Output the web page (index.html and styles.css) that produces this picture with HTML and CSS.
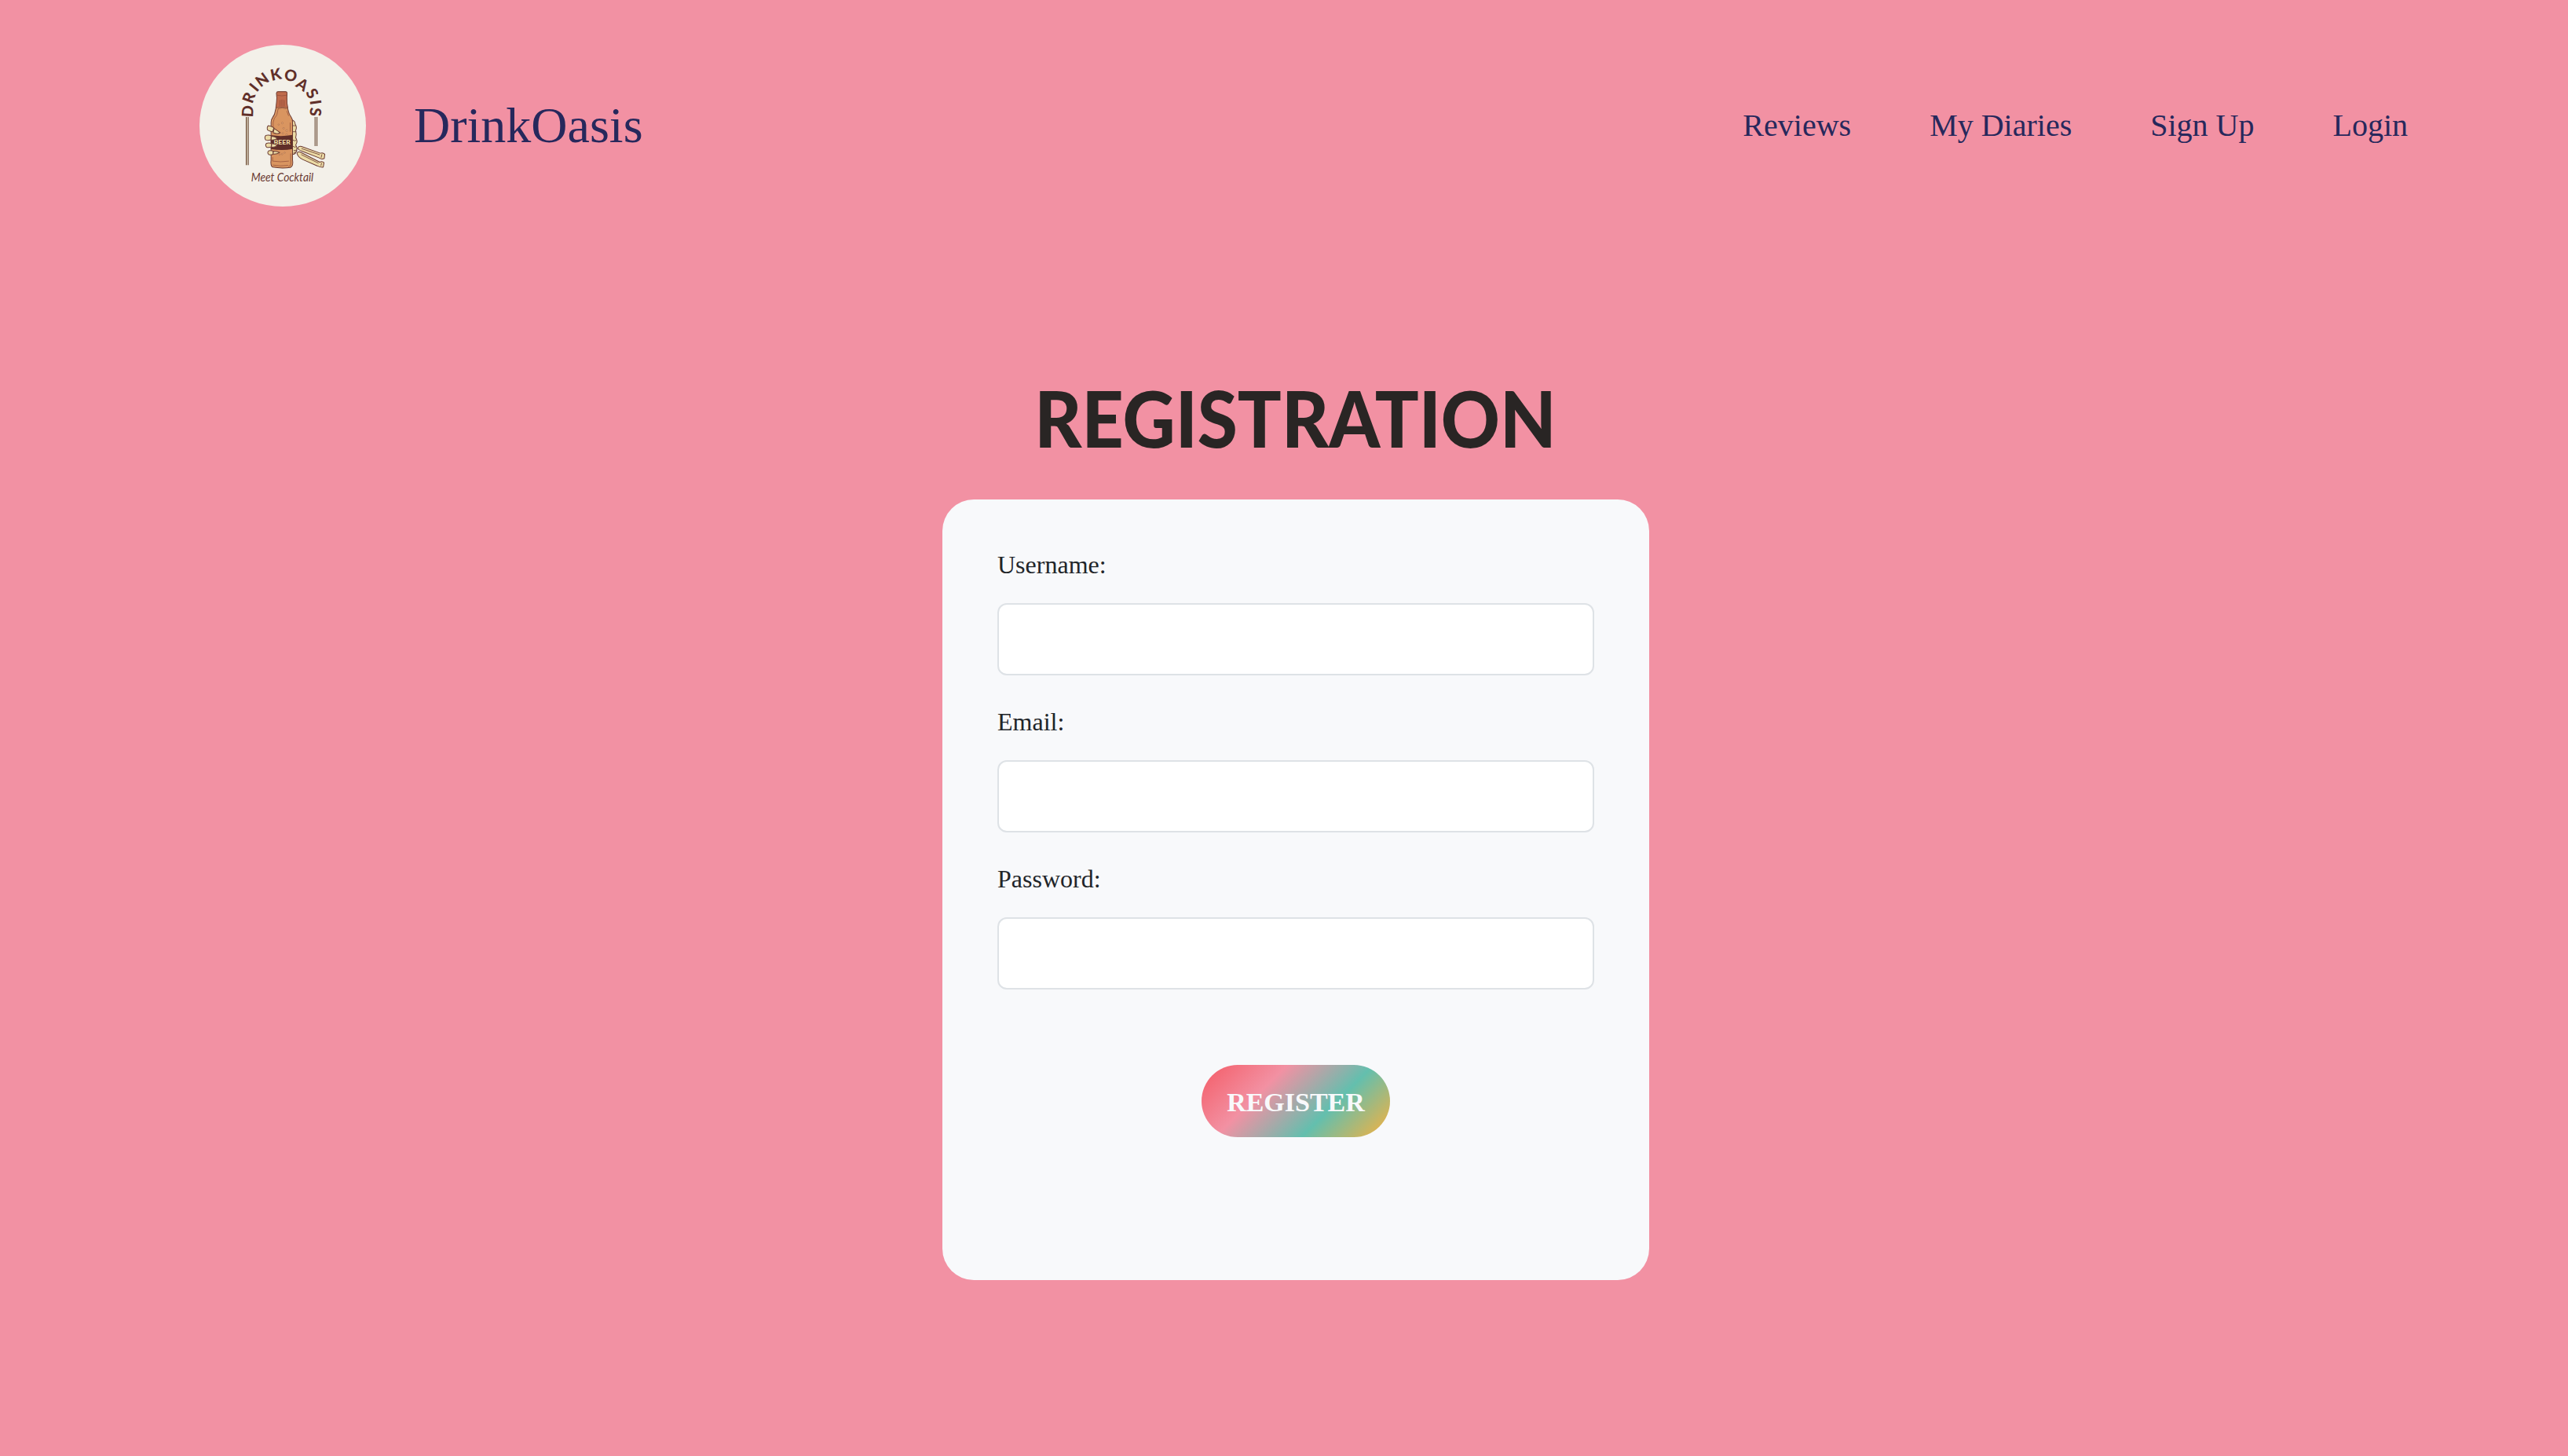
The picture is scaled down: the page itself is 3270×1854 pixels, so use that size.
FILE: index.html
```html
<!DOCTYPE html>
<html lang="en">
<head>
<meta charset="utf-8">
<title>DrinkOasis</title>
<link rel="stylesheet" href="styles.css">
</head>
<body>
<header class="navbar">
  <a class="brand">
    <svg class="logo" viewBox="43 52 635 616" preserveAspectRatio="none" aria-label="DrinkOasis logo">
      <ellipse cx="360.500" cy="360" rx="317.500" ry="308" fill="#f3f0e9"/>
      <g class="logo-arc">
        <text transform="translate(227 305) rotate(-87)" y="21">D</text>
        <text transform="translate(231 253) rotate(-70)" y="21">R</text>
        <text transform="translate(251 214) rotate(-50)" y="21">I</text>
        <text transform="translate(282 185) rotate(-36)" y="21">N</text>
        <text transform="translate(334 165) rotate(-12)" y="21">K</text>
        <text transform="translate(391 169) rotate(9)" y="21">O</text>
        <text transform="translate(436 203) rotate(34)" y="21">A</text>
        <text transform="translate(473 237) rotate(60)" y="21">S</text>
        <text transform="translate(486 271) rotate(82)" y="21">I</text>
        <text transform="translate(486 308) rotate(95)" y="21">S</text>
      </g>
      <g fill="none" stroke-width="3.500">
        <path stroke="#6b4b37" d="M221.500 327V510M229 327V510M484 327V438M491 327V438"/>
        <path stroke="#b5a078" stroke-width="2" d="M225 327V510"/>
      </g>
      <g stroke="#6a3a32" stroke-width="3" stroke-linejoin="round">
        <path fill="#ecdca6" d="M396 338q12 5 12 16q8 12 2 24q4 14 0 28q10 14 0 28q8 10 2 26q-6 12-18 8z"/>
        <path fill="#ecdca6" d="M417 446q4-10 15-7l72 26q10-4 17 4l-2 16q-10 5-19-2l-66-26q-12-3-17-11z"/>
        <path fill="#ecdca6" d="M415 466q3-9 13-5l74 38q9-5 16 2l-3 17q-12 1-23-5l-55-24q-17-7-22-23z"/>
        <path fill="#d99560" d="M337 236q0-5 6-5h28q6 0 6 5l-1 18q0 30 6 50q2 12 11 24q5 7 5 17v145q4 24-8 29q-32 5-68-1q-9-5-6-28V347q0-10 6-18q9-12 10-25q6-20 6-50z"/>
        <path fill="#c06b4c" stroke-width="2" d="M337 236q0-5 6-5h28q6 0 6 5l-1 18q0 25 4 38q-20-5-46 0q4-18 4-38z"/>
      </g>
      <path fill="none" stroke="#8d4937" stroke-width="2" d="M339 244q18 5 36 0M349 263v23M355 261v25M361 261v25M367 263v23M342 296q16-6 34 0M343 296l-5 24q-12 11-14 28v32M389 348v35M391 466v40q-1 10-9 9M322 480v15q30 5 62 0M323 510q28 6 58 1M376 304l7 19"/>
      <path fill="#602f29" d="M315 396q40 7 83-1v54q-40 8-83 0z"/>
      <text class="logo-beer" x="326" y="432" textLength="64" lengthAdjust="spacingAndGlyphs">BEER</text>
      <g fill="#e8b27d" stroke="#9d5d40" stroke-width="1.500">
        <circle cx="345" cy="356" r="2.500"/><circle cx="359" cy="350" r="3"/>
        <circle cx="364" cy="370" r="3"/><circle cx="376" cy="379" r="3.500"/>
        <circle cx="361" cy="389" r="3"/><circle cx="375" cy="394" r="3"/>
        <circle cx="348" cy="470" r="2.500"/><circle cx="358" cy="468" r="3"/><circle cx="368" cy="463" r="2.500"/>
      </g>
      <g fill="#ecdca6" stroke="#6a3a32" stroke-width="3" stroke-linejoin="round">
        <path d="M305 360q10 0 22 8l-5 15q-10-1-19-6q-4-10 2-17z"/>
        <path d="M328 371q12 8 23 16q-10 7-27 0z"/>
        <path d="M296 397q12-3 20 1v16q-12 4-20 1q-7-9 0-18z"/>
        <path d="M318 400q13 1 22 8q-7 8-24 6z"/>
        <path d="M299 427q10-3 18 1v13q-10 4-18 1q-7-8 0-15z"/>
        <path d="M318 428q14 1 22 8q-10 7-22 6z"/>
        <path d="M307 456q10-3 17 1v12q-10 4-17 1q-7-8 0-14z"/>
        <path d="M325 457q14 0 24 5q-12 8-25 6z"/>
      </g>
      <path fill="none" stroke="#6a3a32" stroke-width="2.500" d="M398 360h12M398 383h14M398 414q9 8 15 0M398 438q10 8 16 0M402 455l13-2M402 464l14-8M432 447l70 24M431 470l66 33M510 469l-3 13M509 502l-3 11"/>
      <text class="logo-script" x="240" y="572" textLength="238" lengthAdjust="spacingAndGlyphs">Meet Cocktail</text>
    </svg>
    <span class="brand-name">DrinkOasis</span>
  </a>
  <nav class="nav-links">
    <a>Reviews</a>
    <a>My Diaries</a>
    <a>Sign Up</a>
    <a>Login</a>
  </nav>
</header>
<main class="registration">
  <h1 class="title">REGISTRATION</h1>
  <form class="card">
    <label class="label" for="username">Username:</label>
    <input class="input" id="username" type="text">
    <label class="label" for="email">Email:</label>
    <input class="input" id="email" type="email">
    <label class="label" for="password">Password:</label>
    <input class="input" id="password" type="password">
    <button class="register" type="button">REGISTER</button>
  </form>
</main>
</body>
</html>
```
FILE: styles.css
```css
* {
  box-sizing: border-box;
}

body {
  margin: 0;
  min-height: 1854px;
  background: #f291a3;
  color: #212529;
  font-family: "Liberation Serif", "Times New Roman", serif;
}

.navbar {
  display: flex;
  align-items: center;
  justify-content: space-between;
  height: 320px;
  padding: 0 204px 0 254px;
}

.brand {
  display: flex;
  align-items: center;
  gap: 61px;
  color: #27285c;
}

.logo {
  display: block;
  width: 212px;
  height: 206px;
}

.logo-arc {
  fill: #602f29;
  font: 900 59px Lato, sans-serif;
  text-anchor: middle;
}

.logo-beer {
  fill: #ecdca6;
  font: 900 24px Lato, sans-serif;
}

.logo-script {
  fill: #6a3a32;
  font: italic 400 46px Lato, sans-serif;
}

.brand-name {
  font-size: 64px;
  line-height: 80px;
}

.nav-links {
  display: flex;
  gap: 100px;
  color: #27285c;
  font-size: 40px;
  line-height: 60px;
}

.registration {
  display: flex;
  flex-direction: column;
  align-items: center;
  padding-left: 30px;
}

.title {
  margin: 0;
  height: 316px;
  padding-top: 152px;
  color: #292524;
  font: 900 99px/120px Lato, sans-serif;
  white-space: nowrap;
  transform: scaleX(0.937);
}

.card {
  display: flex;
  flex-direction: column;
  width: 900px;
  height: 994px;
  padding: 60px 70px;
  border-radius: 40px;
  background: #f8f9fb;
}

.label {
  height: 72px;
  font-size: 32px;
  line-height: 46px;
}

.input {
  height: 92px;
  margin-bottom: 36px;
  padding: 12px 24px;
  border: 2px solid #dee2e6;
  border-radius: 12px;
  background: #fff;
  font: inherit;
  font-size: 32px;
}

.register {
  align-self: center;
  width: 240px;
  height: 92px;
  margin-top: 60px;
  padding: 4px 0 0;
  border: 0;
  border-radius: 46px;
  background: linear-gradient(135deg, #f45b66, #f291a3 33%, #63bfae 66%, #fbb03b);
  color: #f8f9fb;
  font: bold 34px/48px "Liberation Serif", "Times New Roman", serif;
}
```
